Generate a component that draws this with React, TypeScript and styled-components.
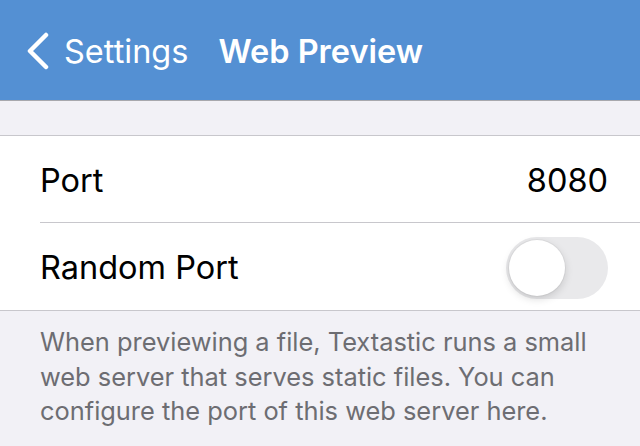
import { FC, useState } from "react";
import styled, { createGlobalStyle } from "styled-components";

const GlobalStyle = createGlobalStyle`
    html, body {
        margin: 0;
        padding: 0;
        background: #f2f1f6;
        font-family: Inter, "Noto Sans", sans-serif;
    }
`;

const Page = styled.div`
    width: 640px;
    height: 446px;
    overflow: hidden;
    background: #f2f1f6;
`;

const NavBar = styled.header`
    height: 101px;
    box-sizing: border-box;
    display: flex;
    flex-direction: row;
    align-items: center;
    padding: 2px 0 0 26px;
    background: #5490d3;
    border-bottom: 1px solid #a8a8ad;
    color: #ffffff;
`;

const BackButton = styled.button`
    display: flex;
    flex-direction: row;
    align-items: center;
    gap: 14px;
    padding: 0;
    border: none;
    outline: none;
    background: transparent;
    color: inherit;
    font-family: inherit;
    font-size: 32.5px;
    cursor: pointer;
`;

const Title = styled.h1`
    margin: 0 0 0 30px;
    font-size: 32.5px;
    font-weight: 600;
`;

const Spacer = styled.div`
    height: 34px;
`;

const Group = styled.section`
    background: #ffffff;
    border-top: 1px solid #c8c7cc;
    border-bottom: 1px solid #c8c7cc;
`;

const Row = styled.div<{ divider?: boolean }>`
    height: 87px;
    box-sizing: border-box;
    padding-top: 2px;
    margin-left: 40px;
    padding-right: 32px;
    display: flex;
    flex-direction: row;
    align-items: center;
    justify-content: space-between;
    border-bottom: ${props => props.divider ? "1px solid #c8c7cc" : "none"};
    font-size: 32.5px;
    color: #000000;
`;

const Value = styled.span`
    color: #000000;
`;

const Toggle = styled.button<{ on: boolean }>`
    position: relative;
    width: 102px;
    height: 62px;
    padding: 0;
    border: none;
    outline: none;
    border-radius: 31px;
    background: ${props => props.on ? "#34c759" : "#e9e9eb"};
    cursor: pointer;
`;

const Knob = styled.span<{ on: boolean }>`
    position: absolute;
    top: 3px;
    left: ${props => props.on ? "43px" : "3px"};
    width: 56px;
    height: 56px;
    border-radius: 50%;
    background: #ffffff;
    box-shadow: 0 3px 8px rgba(0, 0, 0, 0.15), 0 0 0 1px rgba(0, 0, 0, 0.04);
`;

const Footer = styled.p`
    margin: 0;
    padding: 14px 40px 0 40px;
    font-size: 25.4px;
    line-height: 34.5px;
    color: #6d6d72;
`;

const Chevron: FC = () => (
    <svg width="24" height="38" viewBox="0 0 24 38" fill="none">
        <path d="M20 3 L4 19 L20 35" stroke="#ffffff" strokeWidth="4.5" strokeLinecap="round" strokeLinejoin="round" />
    </svg>
);

const App: FC = () => {
    const [randomPort, setRandomPort] = useState(false);

    return (
        <Page>
            <GlobalStyle />
            <NavBar>
                <BackButton>
                    <Chevron />
                    Settings
                </BackButton>
                <Title>Web Preview</Title>
            </NavBar>
            <Spacer />
            <Group>
                <Row divider>
                    <span>Port</span>
                    <Value>8080</Value>
                </Row>
                <Row>
                    <span>Random Port</span>
                    <Toggle on={randomPort} onClick={() => setRandomPort(!randomPort)}>
                        <Knob on={randomPort} />
                    </Toggle>
                </Row>
            </Group>
            <Footer>
                When previewing a file, Textastic runs a small web server that serves static files. You can configure the port of this web server here.
            </Footer>
        </Page>
    );
};

export default App;
